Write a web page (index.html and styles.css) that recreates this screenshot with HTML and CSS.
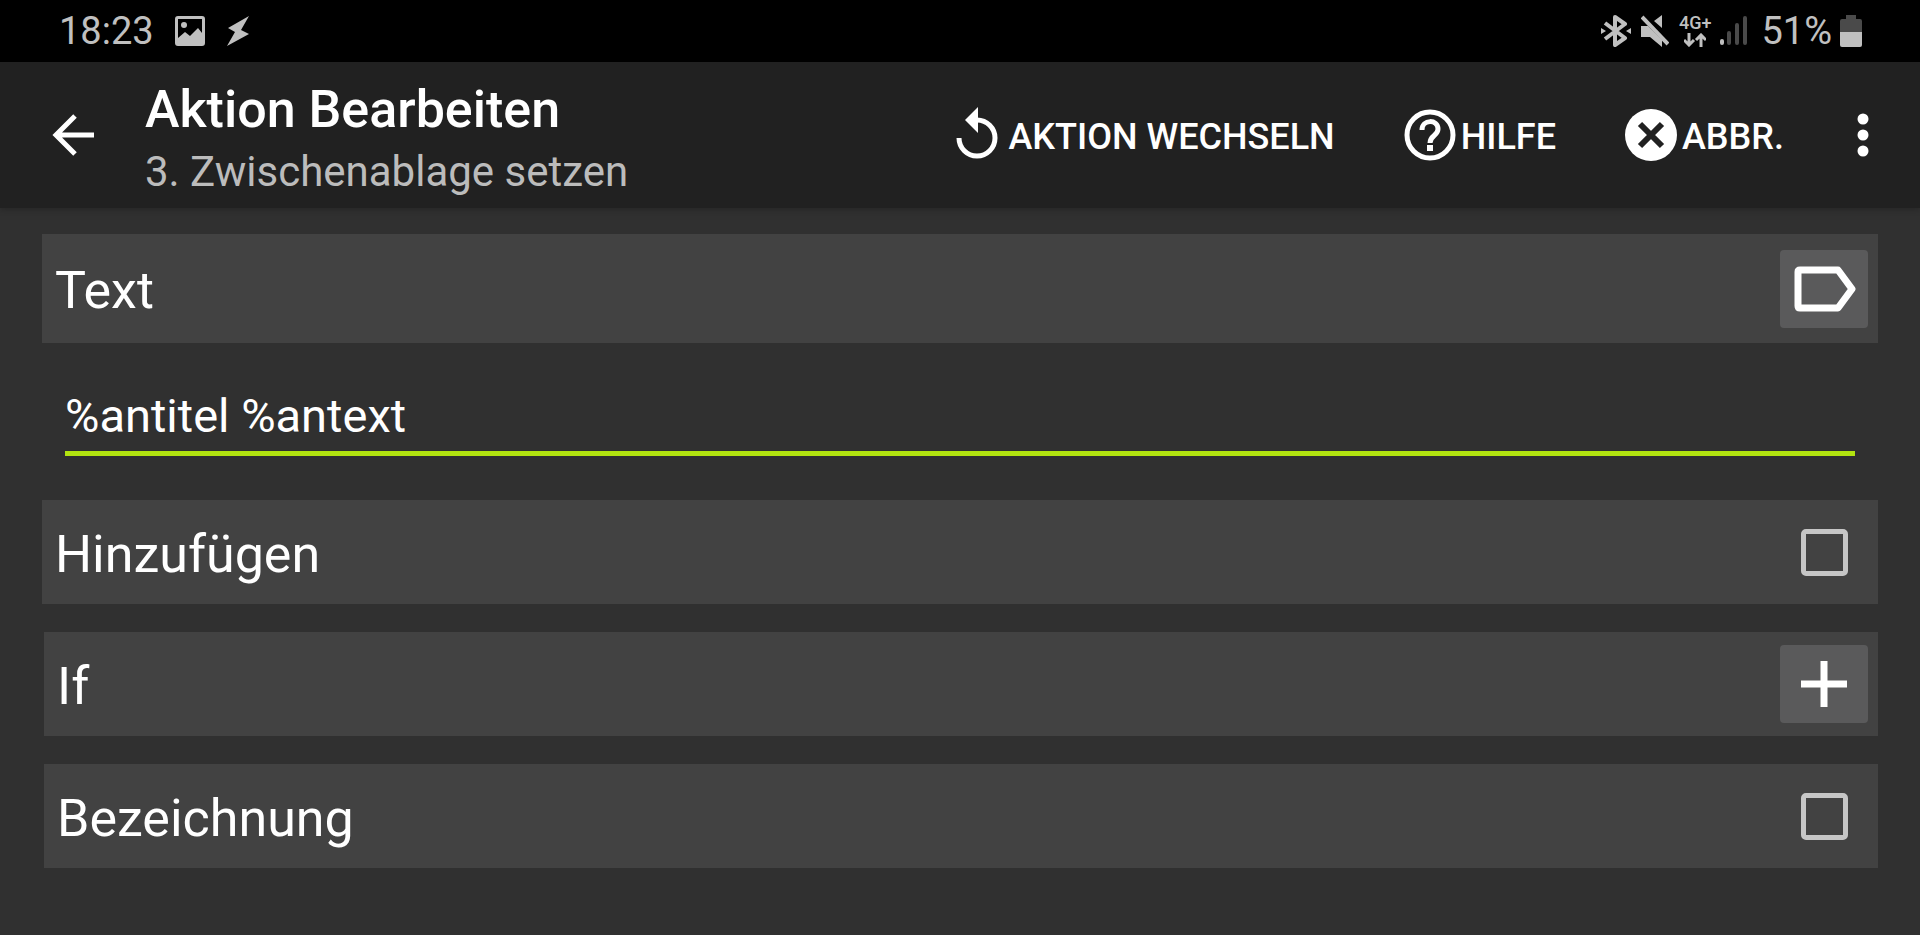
FILE: index.html
```html
<!DOCTYPE html>
<html lang="de">
<head>
<meta charset="utf-8">
<meta name="viewport" content="width=device-width, initial-scale=1">
<title>Aktion Bearbeiten</title>
<link rel="stylesheet" href="styles.css">
</head>
<body>
<div class="status-bar">
  <div class="status-left">
    <span class="clock">18:23</span>
    <svg class="picture-icon" width="30" height="30" viewBox="0 0 30 30" aria-hidden="true">
      <path fill="currentColor" fill-rule="evenodd" d="M3 0H27Q30 0 30 3V27Q30 30 27 30H3Q0 30 0 27V3Q0 0 3 0ZM3 3V22L10 16L15 20L23 12L27 17V3Z"/>
      <circle cx="9" cy="9" r="3" fill="currentColor"/>
    </svg>
    <svg width="24" height="30" viewBox="0 0 24 30" aria-hidden="true">
      <path fill="currentColor" d="M23 0L2 12L9 16L1 30L23 18L15 14Z"/>
    </svg>
  </div>
  <div class="status-right">
    <svg width="30" height="32" viewBox="0 0 30 32" aria-hidden="true">
      <path fill="none" stroke="currentColor" stroke-width="4" stroke-linejoin="round" d="M4 8L24 23L14 30V2L24 9L4 24"/>
      <path fill="currentColor" d="M0 13L5 16L0 19ZM30 13L25 16L30 19Z"/>
    </svg>
    <svg class="mute-icon" width="28" height="32" viewBox="0 0 28 32" aria-hidden="true">
      <path fill="currentColor" d="M0 11H7L21 25V32L9 22H0ZM21 0V13L13 6Z"/>
      <path stroke="currentColor" stroke-width="4" d="M1 2L27 29"/>
    </svg>
    <span class="network">
      <span class="network-type">4G+</span>
      <svg width="22" height="14" viewBox="0 0 22 14" aria-hidden="true">
        <path fill="none" stroke="currentColor" stroke-width="3" d="M5 0V11M0 7L5 12L10 7M17 14V3M12 7L17 2L22 7"/>
      </svg>
    </span>
    <svg class="signal-icon" width="28" height="30" viewBox="0 0 28 30" aria-hidden="true">
      <path stroke="currentColor" stroke-width="4" stroke-linecap="round" d="M3 25V27"/>
      <path stroke="#4a4a4a" stroke-width="4" stroke-linecap="round" d="M10 17V27M18 9V27M26 2V27"/>
    </svg>
    <span class="battery-level">51%</span>
    <svg width="22" height="32" viewBox="0 0 22 32" aria-hidden="true">
      <path fill="#4a4a4a" d="M6 0H16V4H20Q22 4 22 6V18H0V6Q0 4 2 4H6Z"/>
      <path fill="currentColor" d="M0 17H22V30Q22 32 20 32H2Q0 32 0 30Z"/>
    </svg>
  </div>
</div>

<header class="app-bar">
  <button class="icon-button" type="button" aria-label="Zurück">
    <svg width="42" height="42" viewBox="0 0 42 42" aria-hidden="true">
      <path fill="none" stroke="currentColor" stroke-width="5" d="M42 21H4M23 2L4 21L23 40"/>
    </svg>
  </button>
  <div class="titles">
    <h1 class="title">Aktion Bearbeiten</h1>
    <p class="subtitle">3. Zwischenablage setzen</p>
  </div>
  <div class="actions">
    <button class="action" type="button">
      <svg width="52" height="56" viewBox="0 0 52 56" aria-hidden="true">
        <path fill="none" stroke="currentColor" stroke-width="5" d="M8 31A18 18 0 1 0 26 13"/>
        <path fill="currentColor" d="M27 0V26L14 13Z"/>
      </svg>
      <span class="action-label">AKTION WECHSELN</span>
    </button>
    <button class="action" type="button">
      <svg width="52" height="52" viewBox="0 0 52 52" aria-hidden="true">
        <circle cx="26" cy="26" r="23" fill="none" stroke="currentColor" stroke-width="5"/>
        <path fill="none" stroke="currentColor" stroke-width="5" d="M18 21C18 10 34 10 34 20C34 27 26 26 26 34"/>
        <path fill="currentColor" d="M23 36H29V42H23Z"/>
      </svg>
      <span class="action-label">HILFE</span>
    </button>
    <button class="action" type="button">
      <svg width="52" height="52" viewBox="0 0 52 52" aria-hidden="true">
        <circle cx="26" cy="26" r="26" fill="currentColor"/>
        <path stroke="#212121" stroke-width="6" d="M15 15L37 37M37 15L15 37"/>
      </svg>
      <span class="action-label">ABBR.</span>
    </button>
    <button class="icon-button" type="button" aria-label="Weitere Optionen">
      <svg width="20" height="44" viewBox="0 0 20 44" aria-hidden="true">
        <circle cx="10" cy="6" r="5.5" fill="currentColor"/>
        <circle cx="10" cy="22" r="5.5" fill="currentColor"/>
        <circle cx="10" cy="38" r="5.5" fill="currentColor"/>
      </svg>
    </button>
  </div>
</header>

<main class="form">
  <section class="row row-tall">
    <label class="row-label" for="text-value">Text</label>
    <button class="tile-button" type="button" aria-label="Variable wählen">
      <svg width="64" height="46" viewBox="0 0 64 46" aria-hidden="true">
        <path fill="none" stroke="currentColor" stroke-width="7" stroke-linejoin="round" d="M8 4H46L60 23L46 42H8Q6 42 6 40V6Q6 4 8 4Z"/>
      </svg>
    </button>
  </section>
  <input class="text-field" id="text-value" type="text" value="%antitel %antext" spellcheck="false">
  <section class="row">
    <label class="row-label" for="append">Hinzufügen</label>
    <input class="check" id="append" type="checkbox">
  </section>
  <section class="row row-inset">
    <span class="row-label">If</span>
    <button class="tile-button" type="button" aria-label="Bedingung hinzufügen">
      <svg width="46" height="46" viewBox="0 0 46 46" aria-hidden="true">
        <path stroke="currentColor" stroke-width="7" d="M23 0V46M0 23H46"/>
      </svg>
    </button>
  </section>
  <section class="row row-inset">
    <label class="row-label" for="label">Bezeichnung</label>
    <input class="check" id="label" type="checkbox">
  </section>
</main>
</body>
</html>
```

FILE: styles.css
```css
* {
  box-sizing: border-box;
}

body {
  margin: 0;
  min-height: 100vh;
  background: #303030;
  color: #fff;
  font-family: Roboto, "Liberation Sans", sans-serif;
}

button {
  margin: 0;
  padding: 0;
  border: 0;
  background: none;
  color: inherit;
  font: inherit;
}

svg {
  display: block;
  flex: none;
}

.status-bar {
  display: flex;
  justify-content: space-between;
  align-items: center;
  height: 62px;
  padding: 0 58px 0 59px;
  background: #000;
  color: #c0c0c0;
  font-size: 38px;
}

.status-left,
.status-right {
  display: flex;
  align-items: center;
}

.clock {
  margin-right: 21px;
}

.picture-icon {
  margin-right: 21px;
}

.mute-icon {
  margin: 0 10px;
}

.network {
  display: flex;
  flex-direction: column;
  align-items: center;
  gap: 2px;
}

.network-type {
  font-size: 18px;
  font-weight: 500;
  line-height: 16px;
}

.signal-icon {
  margin: 0 14px 0 8px;
}

.battery-level {
  margin-right: 8px;
}

.app-bar {
  display: flex;
  align-items: center;
  min-height: 146px;
  padding: 0 47px 0 52px;
  background: #212121;
  box-shadow: 0 2px 6px rgba(0, 0, 0, 0.2);
}

.titles {
  margin-left: 51px;
  padding-top: 12px;
}

.title {
  margin: 0;
  font-size: 52px;
  font-weight: 500;
  line-height: 62px;
}

.subtitle {
  margin: 0;
  color: #bcbcbc;
  font-size: 42px;
  line-height: 62px;
}

.actions {
  display: flex;
  align-items: center;
  gap: 69px;
  margin-left: auto;
}

.action {
  display: flex;
  align-items: center;
  gap: 5px;
  font-size: 36px;
  font-weight: 500;
}

.action-label {
  padding-top: 3px;
}

.form {
  display: flex;
  flex-direction: column;
  gap: 28px;
  padding: 26px 42px 66px;
}

.row {
  display: flex;
  justify-content: space-between;
  align-items: center;
  min-height: 104px;
  padding: 0 10px 0 13px;
  background: #424242;
}

.row-tall {
  min-height: 109px;
}

.row-inset {
  margin-left: 2px;
}

.row-label {
  padding-top: 5px;
  font-size: 52px;
  line-height: 62px;
}

.tile-button {
  display: grid;
  place-items: center;
  width: 88px;
  height: 78px;
  border-radius: 4px;
  background: #5a5a5b;
}

.text-field {
  height: 85px;
  margin: 0 23px 16px;
  padding: 9px 0 0;
  border: 0;
  border-bottom: 5px solid #b2e410;
  border-radius: 0;
  outline: 0;
  background: none;
  color: inherit;
  font: 47px Roboto, "Liberation Sans", sans-serif;
}

.check {
  appearance: none;
  width: 47px;
  height: 47px;
  margin: 0 20px 0 0;
  border: 5px solid #c6c6c6;
  border-radius: 5px;
}

.check:checked {
  background: #c6c6c6;
}
```
